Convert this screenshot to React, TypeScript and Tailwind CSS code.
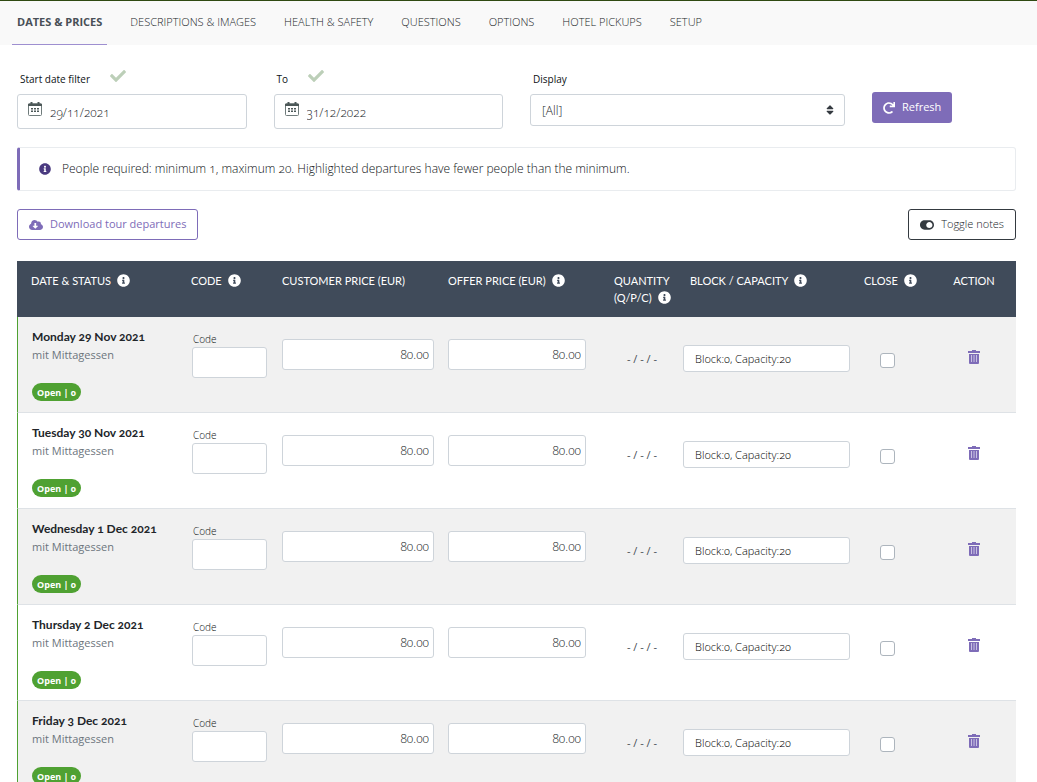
import { FaCheck, FaCloudDownloadAlt, FaInfoCircle, FaRedo, FaSort, FaToggleOn } from "react-icons/fa";

interface Departure {
  id: string;
  date: string;
  note: string;
}

const TABS = [
  "Dates & prices",
  "Descriptions & images",
  "Health & safety",
  "Questions",
  "Options",
  "Hotel pickups",
  "Setup",
];

const DEPARTURES: Departure[] = [
  { id: "d1", date: "Monday 29 Nov 2021", note: "mit Mittagessen" },
  { id: "d2", date: "Tuesday 30 Nov 2021", note: "mit Mittagessen" },
  { id: "d3", date: "Wednesday 1 Dec 2021", note: "mit Mittagessen" },
  { id: "d4", date: "Thursday 2 Dec 2021", note: "mit Mittagessen" },
  { id: "d5", date: "Friday 3 Dec 2021", note: "mit Mittagessen" },
];

function CalendarIcon() {
  return (
    <svg viewBox="0 0 14 14" className="mt-[7px] size-[14px] shrink-0" aria-hidden="true">
      <path d="M1.5 2h11a1 1 0 0 1 1 1v9.500a1 1 0 0 1-1 1h-11a1 1 0 0 1-1-1V3a1 1 0 0 1 1-1z" fill="#fff" stroke="#6f7b7b" />
      <path d="M1 1.500h12a1 1 0 0 1 1 1V4H0V2.500a1 1 0 0 1 1-1zM2.500 0h2v3h-2zM9.500 0h2v3h-2z" fill="#4c5858" />
      <path d="M3 6h2v1.500H3zM6 6h2v1.500H6zM9 6h2v1.500H9zM3 8.500h2V10H3zM6 8.500h2V10H6zM9 8.500h2V10H9z" fill="#4c5858" />
    </svg>
  );
}

function TrashIcon() {
  return (
    <svg viewBox="0 0 12 14" className="h-[14px] w-3" aria-hidden="true">
      <path d="M4 0h4v1h4v2H0V1h4z" fill="#7e6cb8" />
      <path d="M1 4h10v9a1 1 0 0 1-1 1H2a1 1 0 0 1-1-1z" fill="#7e6cb8" />
      <path d="M3.500 5v7M6 5v7M8.500 5v7" stroke="#c9c1e2" />
    </svg>
  );
}

function DateField({ id, label, value }: { id: string; label: string; value: string }) {
  return (
    <div className="col-span-3">
      <div className="flex h-6 items-start gap-5">
        <label htmlFor={id} className="pt-[3px] pl-[3px] text-[10px] leading-4 font-normal">
          {label}
        </label>
        <FaCheck className="size-4 text-[#bccfb8]" />
      </div>
      <div className="mt-[2px] flex h-[35px] rounded-[3px] border border-[#ced4da] pl-[10px]">
        <CalendarIcon />
        <input
          id={id}
          type="text"
          defaultValue={value}
          className="min-w-0 flex-1 pt-[3px] pl-2 text-[12px] text-[#212529] oldstyle-nums outline-none"
        />
      </div>
    </div>
  );
}

function Info() {
  return <FaInfoCircle className="ml-[6px] inline size-[13px] align-[-2px]" />;
}

function PriceInput({ label, className }: { label: string; className: string }) {
  return (
    <input
      type="text"
      aria-label={label}
      defaultValue="80.00"
      className={`mt-[22px] block h-[31px] rounded-[3px] border border-[#ced4da] bg-white pr-1 text-right text-[12px] text-[#212529] oldstyle-nums ${className}`}
    />
  );
}

function DepartureRow({ departure }: { departure: Departure }) {
  const { id, date, note } = departure;
  return (
    <tr className="h-24 align-top *:border-b *:border-b-[#dee2e6] odd:bg-[#f1f1f1]">
      <td className="border-l border-l-[#4fa132] pt-[11px] pl-[14px]">
        <div className="font-['Lato','Open_Sans',sans-serif] text-[12px] leading-[18px] font-bold text-[#212529]">
          {date}
        </div>
        <div className="text-[11px] leading-[18px] font-normal text-[#6c757d]">{note}</div>
        <span className="mt-[19px] block h-[18px] w-[49px] rounded-full bg-[#4fa132] text-center text-[9px] leading-[19px] font-bold text-white">
          Open | 0
        </span>
      </td>
      <td className="px-[7px] pt-[14px]">
        <label htmlFor={`${id}-code`} className="block pl-px text-[10px] leading-4">
          Code
        </label>
        <input
          id={`${id}-code`}
          type="text"
          className="block h-[31px] w-[75px] rounded-[3px] border border-[#ced4da] bg-white px-2 text-[12px]"
        />
      </td>
      <td className="px-[7px]">
        <PriceInput label={`Customer price, ${date}`} className="w-[152px]" />
      </td>
      <td className="px-[7px]">
        <PriceInput label={`Offer price, ${date}`} className="w-[138px]" />
      </td>
      <td className="pt-[33px] text-center text-[11px] leading-[18px] font-normal text-[#495057]">- / - / -</td>
      <td className="px-[7px]">
        <input
          type="text"
          aria-label={`Block and capacity, ${date}`}
          defaultValue="Block:0, Capacity:20"
          className="mt-7 block h-[27px] w-full rounded-[3px] border border-[#ced4da] bg-white pl-[11px] text-[11px] text-black oldstyle-nums"
        />
      </td>
      <td className="pl-[23px]">
        <input
          type="checkbox"
          aria-label={`Close ${date}`}
          className="mt-9 block size-[15px] appearance-none rounded-[3px] border border-[#adb5bd] bg-white checked:bg-[#7e6cb8]"
        />
      </td>
      <td>
        <button type="button" aria-label={`Delete ${date}`} className="mx-auto mt-[33px] block">
          <TrashIcon />
        </button>
      </td>
    </tr>
  );
}

export default function App() {
  return (
    <div className="bg-white font-['Open_Sans','Lato',sans-serif] text-[12px] font-light text-[#0d1114] oldstyle-nums">
      <div className="h-px bg-[#2f4a12]" />
      <nav className="flex h-11 bg-[#f9f9f9] pl-3">
        {TABS.map((tab, i) => (
          <a
            key={tab}
            href="#"
            className={`mr-[18px] border-b px-[5px] pt-[13px] text-[11px] leading-4 whitespace-nowrap uppercase ${i === 0 ? "border-[#9e8fd0] font-bold text-[#495057]" : "border-transparent text-[#212529]"}`}
          >
            {tab}
          </a>
        ))}
      </nav>

      <main className="pr-[21px] pl-[17px]">
        <div className="grid grid-cols-12 gap-x-[27px] pt-[23px]">
          <DateField id="start-date" label="Start date filter" value="29/11/2021" />
          <DateField id="end-date" label="To" value="31/12/2022" />
          <div className="col-span-4">
            <div className="h-6">
              <label htmlFor="display" className="block pt-[3px] pl-[3px] text-[10px] leading-4 font-normal">
                Display
              </label>
            </div>
            <div className="relative mt-[2px]">
              <select
                id="display"
                className="block h-8 w-full appearance-none rounded-[3px] border border-[#ced4da] bg-white pt-px pl-[11px] text-[12px] text-[#212529]"
              >
                <option>[All]</option>
              </select>
              <FaSort className="pointer-events-none absolute top-[10px] right-[9px] size-3 text-[#343a40]" />
            </div>
          </div>
          <div className="col-span-2 pt-6">
            <button
              type="button"
              className="flex h-[31px] items-center gap-[7px] rounded-[3px] bg-[#7e6cb8] px-[11px] text-[11px] font-normal whitespace-nowrap text-white"
            >
              <FaRedo className="size-3" />
              Refresh
            </button>
          </div>
        </div>

        <div className="mt-[18px] flex h-11 items-center gap-[11px] rounded-[3px] border border-l-[3px] border-[#e9ecef] border-l-[#7e6cb8] pl-[19px]">
          <FaInfoCircle className="size-3 text-[#4a3a80]" />
          <p>
            People required: minimum 1, maximum 20. Highlighted departures have fewer people than the minimum.
          </p>
        </div>

        <div className="mt-[18px] flex justify-between">
          <button
            type="button"
            className="flex h-[31px] items-center gap-[7px] rounded-[3px] border border-[#7e6cb8] px-[11px] text-[11px] font-normal whitespace-nowrap text-[#7e6cb8]"
          >
            <FaCloudDownloadAlt className="size-[14px]" />
            Download tour departures
          </button>
          <button
            type="button"
            className="flex h-[31px] items-center gap-[7px] rounded-[3px] border border-[#343a40] px-[11px] text-[11px] whitespace-nowrap text-[#212529]"
          >
            <FaToggleOn className="size-[14px] text-[#343a40]" />
            Toggle notes
          </button>
        </div>

        <table className="mt-[21px] w-full table-fixed border-separate border-spacing-0">
          <colgroup>
            <col />
            <col className="w-[90px]" />
            <col className="w-[166px]" />
            <col className="w-[167px]" />
            <col className="w-[68px]" />
            <col className="w-[181px]" />
            <col className="w-[75px]" />
            <col className="w-[84px]" />
          </colgroup>
          <thead>
            <tr className="h-14 bg-[#404b5a] text-left align-top font-['Lato','Open_Sans',sans-serif] text-[11px] leading-[17px] whitespace-nowrap text-white uppercase *:pt-[11px] *:font-normal">
              <th className="pl-[14px]">Date & status<Info /></th>
              <th className="pl-[6px]">Code<Info /></th>
              <th className="pl-[7px]">Customer price (EUR)</th>
              <th className="pl-[7px]">Offer price (EUR)<Info /></th>
              <th className="pl-[6px]">
                Quantity
                <br />
                (Q/P/C)<Info />
              </th>
              <th className="pl-[14px]">Block / capacity<Info /></th>
              <th className="pl-[7px]">Close<Info /></th>
              <th className="text-center">Action</th>
            </tr>
          </thead>
          <tbody>
            {DEPARTURES.map((departure) => (
              <DepartureRow key={departure.id} departure={departure} />
            ))}
          </tbody>
        </table>
      </main>
    </div>
  );
}
